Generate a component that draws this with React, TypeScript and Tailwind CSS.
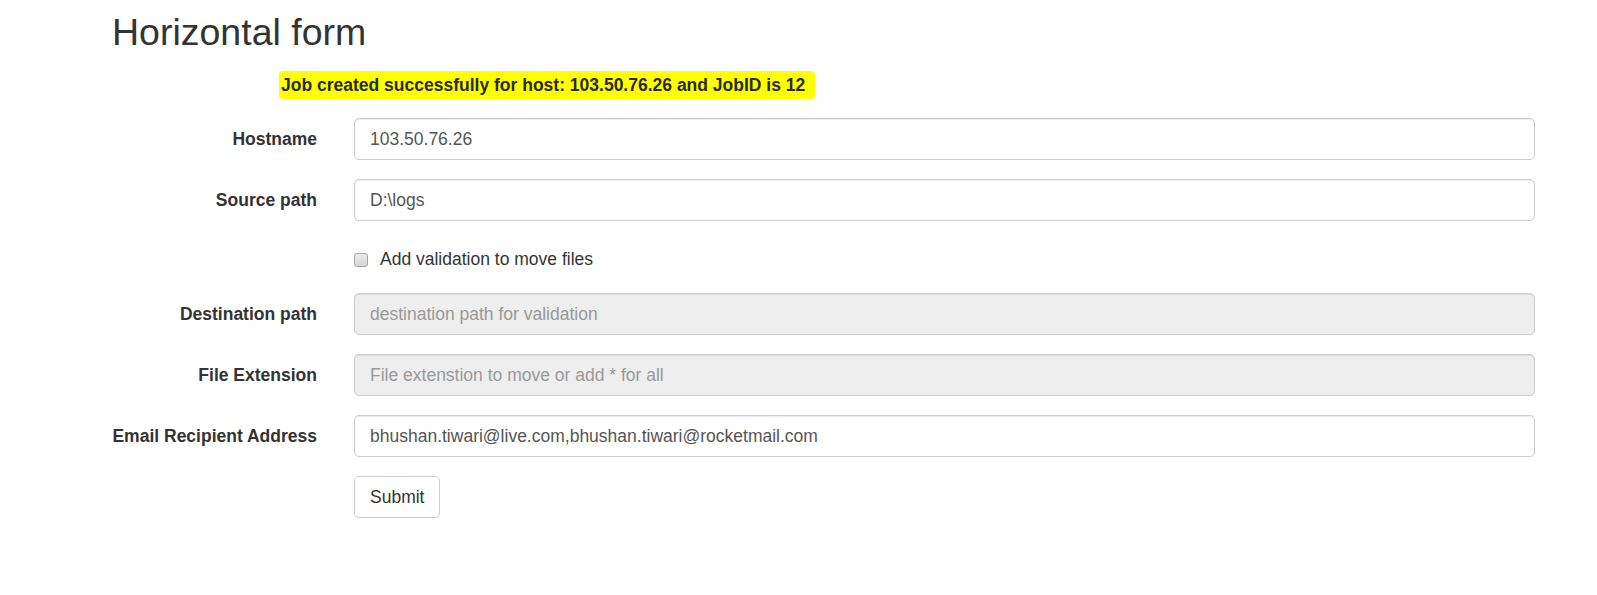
import { ReactNode } from "react";

// bootstrap 3 look, page rendered at 125%
const inputBase =
    "block w-full h-[42px] px-[15px] rounded-[5px] border border-[#ccc] text-[17.5px] text-[#555] shadow-[inset_0_1px_1px_rgba(0,0,0,0.075)] outline-none placeholder:text-[#999]";

function Row({ label, children }: { label?: string; children: ReactNode }) {
    return (
        <div className="flex items-center">
            <label className="w-[205px] shrink-0 text-right text-[17.5px] font-bold text-[#333]">{label}</label>
            <div className="ml-[37px] w-[1181px] shrink-0">{children}</div>
        </div>
    );
}

export default function App() {
    return (
        <div className="min-h-[595px] bg-white font-['Liberation_Sans',Arial,sans-serif] text-[#333]">
            <div className="pl-[112px] pt-[12px]">
                <h1 className="text-[37.5px] leading-[41px] font-normal">Horizontal form</h1>

                <div className="mt-[18px] ml-[167px] flex">
                    <span className="inline-block bg-[#ffff00] pl-[2px] pr-[10px] h-[28px] leading-[28px] rounded-[4px] text-[17.5px] font-bold text-[#2a2a2a]">
                        Job created successfully for host: 103.50.76.26 and JobID is 12
                    </span>
                </div>

                <form className="mt-[19px] flex flex-col" onSubmit={(e) => e.preventDefault()}>
                    <Row label="Hostname">
                        <input className={inputBase} defaultValue="103.50.76.26" />
                    </Row>
                    <div className="mt-[19px]">
                        <Row label="Source path">
                            <input className={inputBase} defaultValue="D:\logs" />
                        </Row>
                    </div>
                    <div className="mt-[21px] h-[35px] flex items-center">
                        <Row>
                            <label className="flex items-center gap-[12px] text-[17.5px] text-[#333]">
                                <input
                                    type="checkbox"
                                    className="appearance-none h-[14px] w-[14px] rounded-[3px] border border-[#a6a6a6] bg-gradient-to-b from-[#ececec] to-[#d6d6d6]"
                                />
                                Add validation to move files
                            </label>
                        </Row>
                    </div>
                    <div className="mt-[16px]">
                        <Row label="Destination path">
                            <input
                                className={inputBase + " bg-[#eee] cursor-not-allowed"}
                                placeholder="destination path for validation"
                                disabled
                            />
                        </Row>
                    </div>
                    <div className="mt-[19px]">
                        <Row label="File Extension">
                            <input
                                className={inputBase + " bg-[#eee] cursor-not-allowed"}
                                placeholder="File extenstion to move or add * for all"
                                disabled
                            />
                        </Row>
                    </div>
                    <div className="mt-[19px]">
                        <Row label="Email Recipient Address">
                            <input
                                className={inputBase}
                                defaultValue="bhushan.tiwari@live.com,bhushan.tiwari@rocketmail.com"
                            />
                        </Row>
                    </div>
                    <div className="mt-[19px]">
                        <Row>
                            <button
                                type="submit"
                                className="h-[42px] px-[15px] rounded-[5px] border border-[#ccc] bg-white text-[17.5px] text-[#333]"
                            >
                                Submit
                            </button>
                        </Row>
                    </div>
                </form>
            </div>
        </div>
    );
}
